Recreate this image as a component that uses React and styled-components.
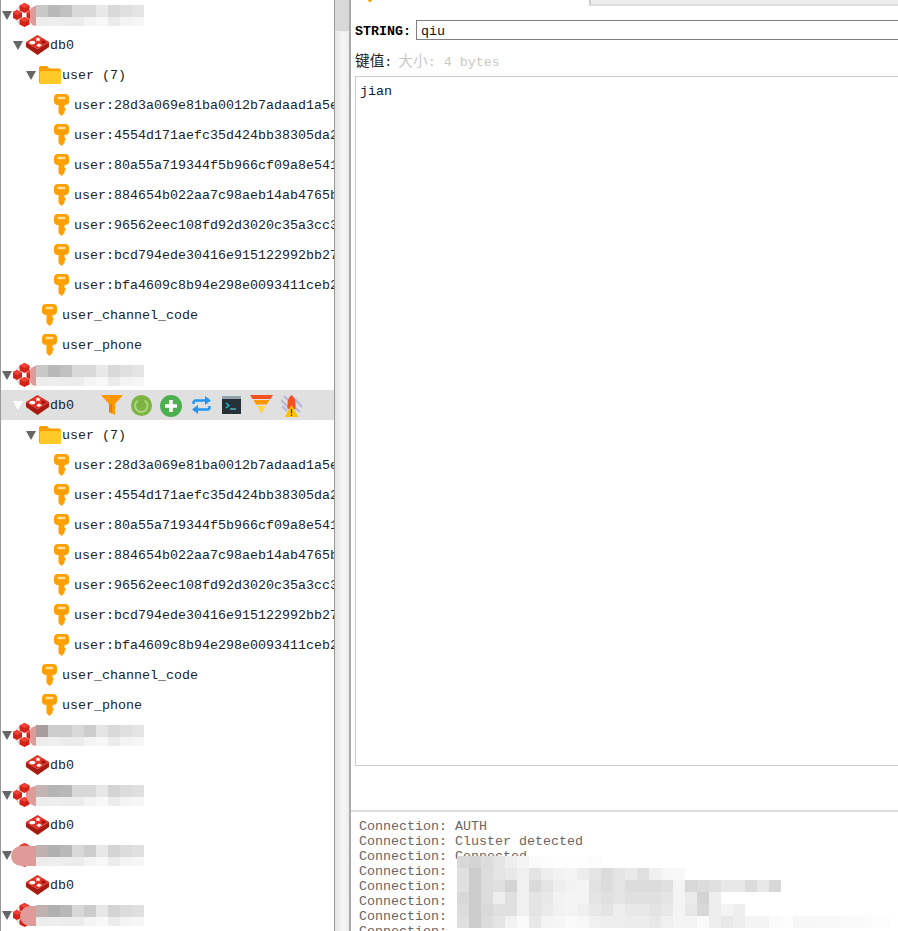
import React from 'react';
import styled, { createGlobalStyle } from 'styled-components';

const GlobalStyle = createGlobalStyle`
  html, body { margin: 0; padding: 0; background: #fff; overflow: hidden; }
  body { font-family: "Liberation Mono", "Noto Sans CJK SC", monospace; font-size: 13.33px; color: #222; }
`;

const Window = styled.div` display: flex; width: 898px; height: 931px; overflow: hidden; `;
const TreePanel = styled.div`
  width: 333px; height: 100%; border-left: 1px solid #999; overflow: hidden; flex-shrink: 0;
`;
const ScrollBar = styled.div`
  width: 14px; flex-shrink: 0; border-left: 1px solid #999; border-right: 2px solid #aaa;
  background: linear-gradient(90deg, #e4e4e4, #f6f6f6 60%, #ececec);
`;
const ScrollThumb = styled.div` height: 32px; background: #d8d8d8; border-bottom: 1px solid #eee; box-sizing: border-box; `;

const Row = styled.div`
  position: relative; display: flex; align-items: center; height: 30px; white-space: nowrap;
  padding-left: ${p => p.$indent - 1}px;
  background: ${p => p.$selected ? '#e0e0e0' : 'transparent'};
`;
const Toggle = styled.span`
  width: 0; height: 0; flex-shrink: 0; margin-right: ${p => p.$gap}px;
  border-left: 5px solid transparent; border-right: 5px solid transparent;
  border-top: 9px solid ${p => p.$color};
`;
const Label = styled.span` margin-left: ${p => p.$gap}px; `;
const IconSlot = styled.svg` display: block; flex-shrink: 0; `;
const Toolbar = styled.div` display: flex; align-items: center; position: absolute; left: 99px; top: 0; height: 30px; `;
const ToolIcon = styled.svg` display: block; position: absolute; top: 5px; left: ${p => p.$x}px; `;

const MosaicBox = styled.div` position: relative; align-self: flex-start; margin-top: 5px; `;
const MosaicLine = styled.div` display: flex; height: ${p => p.$height}px; `;
const Cell = styled.div` width: 12px; flex-shrink: 0; background: ${p => p.$shade}; `;
const Smear = styled.div`
  position: absolute; top: 1px; right: 100%; width: ${p => p.$width}px; height: 20px;
  background: #e09a9a; border-radius: 10px 0 0 10px;
`;

const Content = styled.div` flex: 1; min-width: 0; display: flex; flex-direction: column; position: relative; `;
const TabStrip = styled.div` position: relative; height: 6px; flex-shrink: 0; `;
const InactiveTab = styled.div`
  position: absolute; left: 238px; right: 0; top: 0; height: 6px; box-sizing: border-box;
  background: #eee; border-left: 2px solid #ccc; border-bottom: 2px solid #ddd;
`;
const TabDot = styled.div`
  position: absolute; left: 17px; top: 0; width: 4px; height: 2px; background: #ffa000; border-radius: 0 0 2px 2px;
`;
const KeyBar = styled.div` display: flex; align-items: center; height: 20px; margin: 14px 0 0 4px; `;
const KeyType = styled.b` width: 61px; flex-shrink: 0; padding-top: 3px; font-weight: 700; color: #000; `;
const KeyInput = styled.div`
  flex: 1; height: 20px; box-sizing: border-box; border: 1px solid #808080; border-right: 0;
  padding-left: 4px; line-height: 21px; color: #111;
`;
const ValueBar = styled.div` display: flex; align-items: center; height: 20px; margin: 9px 0 0 4px; gap: 6px; `;
const ValueTitle = styled.span` color: #222; `;
const ValueSize = styled.span` color: #c8c8c8; `;
const Han = styled.span` font-size: 14.67px; `;
const Editor = styled.div`
  height: 690px; box-sizing: border-box; margin: 7px 0 0 4px; padding: 7px 4px;
  border: 1px solid #ccc; border-right: 0; color: #0b1a33; line-height: 15px;
`;
const LogPane = styled.div`
  position: relative; flex: 1; min-height: 0; overflow: hidden; margin-top: 44px;
  border-top: 2px solid #e0e0e0; padding: 7px 0 0 8px; color: #666; line-height: 15px;
`;
const LogLine = styled.div` white-space: pre; `;
const LogMosaic = styled.div` position: absolute; left: 106px; top: 44px; `;

const RedisCluster = () => (
  <IconSlot width="23" height="24" viewBox="0.5 0 23 24">
    <circle cx="12" cy="12" r="9.5" fill="#fff" stroke="#cfd3d8" strokeWidth="1.2" />
    {[[12, 5], [4.5, 12], [19, 12], [12, 19]].map(([x, y]) => (
      <g key={`${x}-${y}`} transform={`translate(${x} ${y})`}>
        <polygon points="0,-5 5,-2.5 5,2.5 0,5 -5,2.5 -5,-2.5" fill="#d32218" />
        <polygon points="0,-5 5,-2.5 0,0 -5,-2.5" fill="#ee4034" />
      </g>
    ))}
  </IconSlot>
);

const RedisDb = () => (
  <IconSlot width="23" height="20" viewBox="0 0 23 20">
    <polygon points="0,7 0,12 11.5,20 23,12 23,7 11.5,14" fill="#a81b13" />
    <polygon points="11.5,0 23,7 11.5,14 0,7" fill="#e22b20" />
    <polygon points="12,1.8 13,3.4 15,3.6 13.4,4.8 13.8,6.4 12,5.4 10.2,6.4 10.6,4.8 9,3.6 11,3.4" fill="#fff" />
    <ellipse cx="6.3" cy="7.5" rx="3" ry="1.8" fill="#fff" />
    <polygon points="13,8.4 16,10.3 12.6,12 10.2,10.2" fill="#fff" />
    <polygon points="16.2,5.6 20,7.2 16.2,8.8" fill="#7c120c" />
  </IconSlot>
);

const Folder = () => (
  <IconSlot width="22" height="18" viewBox="0 0 22 18">
    <path d="M2 0h6l2.5 2.5H20a2 2 0 0 1 2 2V16a2 2 0 0 1-2 2H2a2 2 0 0 1-2-2V2a2 2 0 0 1 2-2z" fill="#ffa000" />
    <path d="M3 5h17a2 2 0 0 1 2 2v9a2 2 0 0 1-2 2H3a2 2 0 0 1-2-2V7a2 2 0 0 1 2-2z" fill="#ffca28" />
  </IconSlot>
);

const KeyIcon = () => (
  <IconSlot width="17" height="24" viewBox="0 0 17 24">
    <path d="M5 1h7a4 4 0 0 1 4 4v3a4 4 0 0 1-4 4h-.5v3h1v2.500h-1v2.500L8.500 23 5.500 20V12H5a4 4 0 0 1-4-4V5a4 4 0 0 1 4-4z" fill="#ffa000" />
    <rect x="4.500" y="3.800" width="8" height="2.400" rx="1.200" fill="#ffdf9a" />
  </IconSlot>
);

const FunnelTool = () => (
  <ToolIcon $x={1} width="22" height="20" viewBox="0 0 22 20">
    <polygon points="0,0 22,0 14,9 14,20 8,17 8,9" fill="#ff9800" />
    <polygon points="8,9 11,9 11,18.5 8,17" fill="#f57c00" />
  </ToolIcon>
);
const ReloadTool = () => (
  <ToolIcon $x={31} width="21" height="21" viewBox="0 0 21 21">
    <circle cx="10.5" cy="10.5" r="10.5" fill="#7cb342" />
    <path d="M7 5.5a6.2 6.2 0 1 0 6.5-.1" fill="none" stroke="#aed581" strokeWidth="2" />
  </ToolIcon>
);
const AddTool = () => (
  <ToolIcon $x={60} width="22" height="22" viewBox="0 0 22 22">
    <circle cx="11" cy="11" r="11" fill="#4caf50" />
    <path d="M11 5v12M5 11h12" stroke="#fff" strokeWidth="3.6" />
  </ToolIcon>
);
const SyncTool = () => (
  <ToolIcon $x={92} width="19" height="20" viewBox="0 0 19 20">
    <path d="M1.5 9V7.5a2 2 0 0 1 2-2H14M17.5 11v1.500a2 2 0 0 1-2 2H5" fill="none" stroke="#2196f3" strokeWidth="2.4" />
    <polygon points="13,1 19,5.500 13,10" fill="#2196f3" />
    <polygon points="6,10 0,14.500 6,19" fill="#2196f3" />
  </ToolIcon>
);
const TerminalTool = () => (
  <ToolIcon $x={122} width="19" height="20" viewBox="0 0 19 20">
    <rect x="0" y="1" width="19" height="18" fill="#263238" />
    <rect x="0" y="1" width="19" height="3" fill="#90a4ae" />
    <path d="M4 8l3 2.500-3 2.500" fill="none" stroke="#26c6da" strokeWidth="1.200" />
    <path d="M8 14h6" stroke="#4dd0e1" strokeWidth="1.200" />
  </ToolIcon>
);
const FilterStackTool = () => (
  <ToolIcon $x={150} width="23" height="19" viewBox="0 0 23 19">
    <polygon points="0,0 23,0 20.500,4 2.500,4" fill="#f4511e" />
    <polygon points="3.500,5 19.500,5 17,9.500 6,9.500" fill="#ff9800" />
    <polygon points="7,11 16,11 11.500,19" fill="#ffd54f" />
  </ToolIcon>
);
const FlushTool = () => (
  <ToolIcon $x={181} width="22" height="22" viewBox="0 0 22 22">
    <path d="M0 5l8 8M3 1l6 6M13 3l8 9M12 11l7 6M1 11l5 5" stroke="#b4b8de" strokeWidth="2.200" fill="none" />
    <path d="M10.500 0c2.800 2 4 5 4 9v5h-8V9c0-4 1.200-7 4-9z" fill="#f4511e" />
    <polygon points="10.500,10 17.500,22 3.500,22" fill="#ffc107" />
    <path d="M10.500 14v4.500M10.500 19.500v1.500" stroke="#333" strokeWidth="1.200" />
  </ToolIcon>
);

const Mosaic = ({ lines, smear }) => (
  <MosaicBox>
    {smear && <Smear $width={smear} />}
    {lines.map((shades, i) => (
      <MosaicLine key={i} $height={i === 0 ? 12 : 9}>
        {shades.map((s, j) => <Cell key={j} $shade={`#${s}`} />)}
      </MosaicLine>
    ))}
  </MosaicBox>
);

const ConnectionRow = ({ lines, smear }) => (
  <Row $indent={2}>
    <Toggle $color="#666" $gap={1} />
    <RedisCluster />
    <Mosaic lines={lines} smear={smear} />
  </Row>
);

const DbRow = ({ open, selected, children }) => (
  <Row $indent={13} $selected={selected}>
    <Toggle $color={selected ? '#fff' : open ? '#666' : 'transparent'} $gap={3} />
    <RedisDb />
    <Label $gap={1}>db0</Label>
    {children}
  </Row>
);

const FolderRow = ({ name }) => (
  <Row $indent={26}>
    <Toggle $color="#666" $gap={3} />
    <Folder />
    <Label $gap={1}>{name}</Label>
  </Row>
);

const KeyRow = ({ indent, name }) => (
  <Row $indent={indent}>
    <KeyIcon />
    <Label $gap={4}>{name}</Label>
  </Row>
);

const userKeys = [
  'user:28d3a069e81ba0012b7adaad1a5e',
  'user:4554d171aefc35d424bb38305da2',
  'user:80a55a719344f5b966cf09a8e541',
  'user:884654b022aa7c98aeb14ab4765b',
  'user:96562eec108fd92d3020c35a3cc3',
  'user:bcd794ede30416e915122992bb27',
  'user:bfa4609c8b94e298e0093411ceb2',
];

const UserTree = () => (
  <>
    <FolderRow name="user (7)" />
    {userKeys.map(k => <KeyRow key={k} indent={53} name={k} />)}
    <KeyRow indent={41} name="user_channel_code" />
    <KeyRow indent={41} name="user_phone" />
  </>
);

const second = ['ececec', 'eeeeee', 'ececec', 'ececec', 'f4f4f4', 'f8f8f8', 'ececec', 'f4f4f4', 'f6f6f6'];
const conn1 = [['c8c8c8', 'b8b8b8', 'c0c0c0', 'd8d8d8', 'd8d8d8', 'e8e8e8', 'd8d8d8', 'e0e0e0', 'e4e4e4'], second];
const conn3 = [['a89c9c', 'cccccc', 'cccccc', 'd8d8d8', 'cccccc', 'e4e4e4', 'd8d8d8', 'e0e0e0', 'e4e4e4'], second];
const conn4 = [['c4b4b4', 'b4b4b4', 'b8b8b8', 'd8d8d8', 'd8d8d8', 'e8e8e8', 'd4d4d4', 'dcdcdc', 'e0e0e0'], second];
const conn5 = [['c0b0b0', 'b0b0b0', 'b8b8b8', 'd8d8d8', 'cccccc', 'e8e8e8', 'd4d4d4', 'dcdcdc', 'e0e0e0'], second];

const logShades = [
  ['d8', 'd4', 'dc', 'e4', 'ee', 'f4', 'fa', 'fc', 'fe', 'fe', 'fe', 'fc'],
  ['e0', 'cc', 'dd', 'e4', 'e8', 'f0', 'e4', 'ee', 'f2', 'f4', 'ec', 'e4', 'dc', 'e4', 'ea', 'e0', 'f0', 'f6', 'f8'],
  ['e0', 'cc', 'dd', 'e0', 'd4', 'f0', 'da', 'e4', 'ee', 'f2', 'f4', 'e2', 'dc', 'e4', 'dc', 'dc', 'dc', 'e0', 'f4', 'd8', 'dc', 'e0', 'e8', 'e8', 'dc', 'e8', 'd8'],
  ['d8', 'cc', 'dd', 'ee', 'e0', 'f0', 'e4', 'e8', 'f2', 'f4', 'f4', 'e4', 'e0', 'e4', 'e0', 'e0', 'e0', 'e4', 'f4', 'ea', 'd4', 'ee'],
  ['dc', 'cc', 'd8', 'e0', 'e0', 'f0', 'e4', 'ea', 'f2', 'f4', 'f0', 'e8', 'e4', 'ee', 'e8', 'e8', 'e4', 'e8', 'f4', 'e8', 'd8', 'ee', 'f4', 'ee'],
  ['e0', 'cc', 'dc', 'e4', 'f2', 'fa', 'e8', 'f4', 'f6', 'fa', 'f8', 'f0', 'ee', 'ee', 'ec', 'ec', 'e8', 'f0', 'f4', 'f4', 'fa', 'ee', 'e8', 'ee', 'f4', 'f4', 'fa', 'fc', 'f6', 'f6', 'f8', 'f8', 'fa', 'fa', 'fc', 'fc'],
];

const logLines = [
  'Connection: AUTH',
  'Connection: Cluster detected',
  'Connection: Connected',
  'Connection:',
  'Connection:',
  'Connection:',
  'Connection:',
  'Connection:',
];

const App = () => (
  <Window>
    <GlobalStyle />
    <TreePanel>
      <ConnectionRow lines={conn1} smear={6} />
      <DbRow open />
      <UserTree />
      <ConnectionRow lines={conn1} smear={6} />
      <DbRow selected>
        <Toolbar>
          <FunnelTool />
          <ReloadTool />
          <AddTool />
          <SyncTool />
          <TerminalTool />
          <FilterStackTool />
          <FlushTool />
        </Toolbar>
      </DbRow>
      <UserTree />
      <ConnectionRow lines={conn3} smear={6} />
      <DbRow />
      <ConnectionRow lines={conn4} smear={9} />
      <DbRow />
      <ConnectionRow lines={conn5} smear={25} />
      <DbRow />
      <ConnectionRow lines={conn5} smear={16} />
    </TreePanel>
    <ScrollBar>
      <ScrollThumb />
    </ScrollBar>
    <Content>
      <TabStrip>
        <TabDot />
        <InactiveTab />
      </TabStrip>
      <KeyBar>
        <KeyType>STRING:</KeyType>
        <KeyInput>qiu</KeyInput>
      </KeyBar>
      <ValueBar>
        <ValueTitle><Han>键值</Han>:</ValueTitle>
        <ValueSize><Han>大小</Han>: 4 bytes</ValueSize>
      </ValueBar>
      <Editor>jian</Editor>
      <LogPane>
        {logLines.map((line, i) => <LogLine key={i}>{line}</LogLine>)}
        <LogMosaic>
          {logShades.map((shades, i) => (
            <MosaicLine key={i} $height={12}>
              {shades.map((s, j) => <Cell key={j} $shade={`#${s.repeat(3)}`} />)}
            </MosaicLine>
          ))}
        </LogMosaic>
      </LogPane>
    </Content>
  </Window>
);

export default App;
